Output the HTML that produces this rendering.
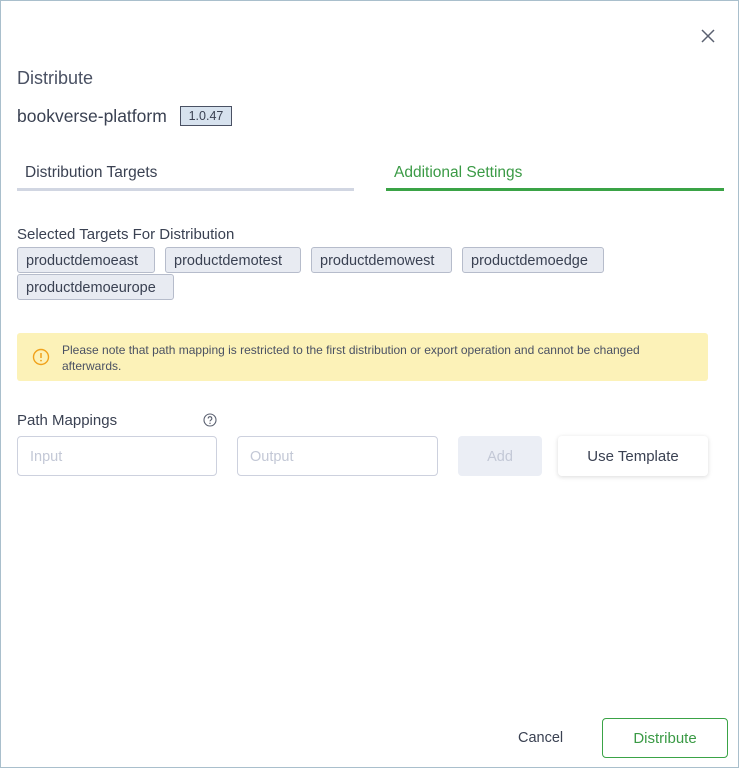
<!DOCTYPE html>
<html><head><style>
*{box-sizing:border-box;margin:0;padding:0}
body{width:739px;height:768px;background:#fff;font-family:"Liberation Sans",sans-serif;color:#3a4152;position:relative;overflow:hidden}
.frame{position:absolute;left:0;top:0;width:739px;height:768px;border:1px solid #a9bfcc}
.a{position:absolute;white-space:nowrap}
.chip{position:absolute;height:26px;border:1px solid #b6bccb;background:#e8ebf2;border-radius:3px;font-size:14.5px;line-height:26px;padding:0 8px;color:#3a4152}
.inp{position:absolute;top:436px;height:40px;border:1px solid #cdd1de;border-radius:4px;font-size:14.5px;color:#c3c8d6;padding:0 12px;line-height:40px}
</style></head><body>
<div class="frame"></div>
<svg class="a" style="left:701px;top:29px" width="14" height="14" viewBox="0 0 14 14"><path d="M1 1L13 13M13 1L1 13" stroke="#5a6070" stroke-width="1.5"/></svg>
<div class="a" style="left:17px;top:68px;font-size:18px;color:#4a5163">Distribute</div>
<div class="a" style="left:17px;top:106px;font-size:17.5px;color:#3a4152">bookverse-platform</div>
<div class="a" style="left:180px;top:106px;width:52px;height:20px;border:1px solid #4a5163;background:#d7e2ee;font-size:12.5px;line-height:18px;text-align:center">1.0.47</div>
<div class="a" style="left:25px;top:164px;font-size:15.5px;color:#3a4152">Distribution Targets</div>
<div class="a" style="left:17px;top:188px;width:337px;height:3px;background:#d1d6e2"></div>
<div class="a" style="left:394px;top:164px;font-size:15.5px;color:#3a9a45">Additional Settings</div>
<div class="a" style="left:386px;top:188px;width:338px;height:3px;background:#3aa346"></div>
<div class="a" style="left:17px;top:226px;font-size:15px;color:#3a4152">Selected Targets For Distribution</div>
<div class="chip" style="left:17px;top:247px;width:138px">productdemoeast</div>
<div class="chip" style="left:165px;top:247px;width:136px">productdemotest</div>
<div class="chip" style="left:311px;top:247px;width:141px">productdemowest</div>
<div class="chip" style="left:462px;top:247px;width:142px">productdemoedge</div>
<div class="chip" style="left:17px;top:274px;width:157px">productdemoeurope</div>
<div class="a" style="left:17px;top:333px;width:691px;height:48px;background:#fcf2b8;border-radius:3px"></div>
<svg class="a" style="left:32px;top:348px" width="18" height="18" viewBox="0 0 18 18"><circle cx="9" cy="9" r="7.5" fill="none" stroke="#f0a21b" stroke-width="1.4"/><path d="M9 5v5" stroke="#f0a21b" stroke-width="1.5"/><circle cx="9" cy="12.6" r="0.9" fill="#f0a21b"/></svg>
<div class="a" style="left:62px;top:342px;font-size:12px;line-height:16px;color:#4a5163;white-space:normal;width:640px">Please note that path mapping is restricted to the first distribution or export operation and cannot be changed afterwards.</div>
<div class="a" style="left:17px;top:412px;font-size:15px;color:#3a4152">Path Mappings</div>
<svg class="a" style="left:203px;top:413px" width="14" height="14" viewBox="0 0 14 14"><circle cx="7" cy="7" r="6" fill="none" stroke="#5a6070" stroke-width="1.1"/><path d="M5.2 5.5a1.8 1.8 0 1 1 2.6 1.6c-.6.3-.8.7-.8 1.3" fill="none" stroke="#5a6070" stroke-width="1.1"/><circle cx="7" cy="10.3" r=".7" fill="#5a6070"/></svg>
<div class="inp" style="left:17px;width:200px">Input</div>
<div class="inp" style="left:237px;width:201px">Output</div>
<div class="a" style="left:458px;top:436px;width:84px;height:40px;background:#ebeef5;border-radius:4px;font-size:14.5px;color:#c3c8d6;text-align:center;line-height:42px">Add</div>
<div class="a" style="left:558px;top:436px;width:150px;height:40px;background:#fff;border-radius:4px;box-shadow:0 1px 5px rgba(0,0,0,.15);font-size:15px;color:#3a4152;text-align:center;line-height:42px">Use Template</div>
<div class="a" style="left:518px;top:730px;font-size:14.5px;color:#3a4152">Cancel</div>
<div class="a" style="left:602px;top:718px;width:126px;height:40px;border:1px solid #3aa346;border-radius:4px;font-size:15px;color:#3a9a45;text-align:center;line-height:40px">Distribute</div>
</body></html>
